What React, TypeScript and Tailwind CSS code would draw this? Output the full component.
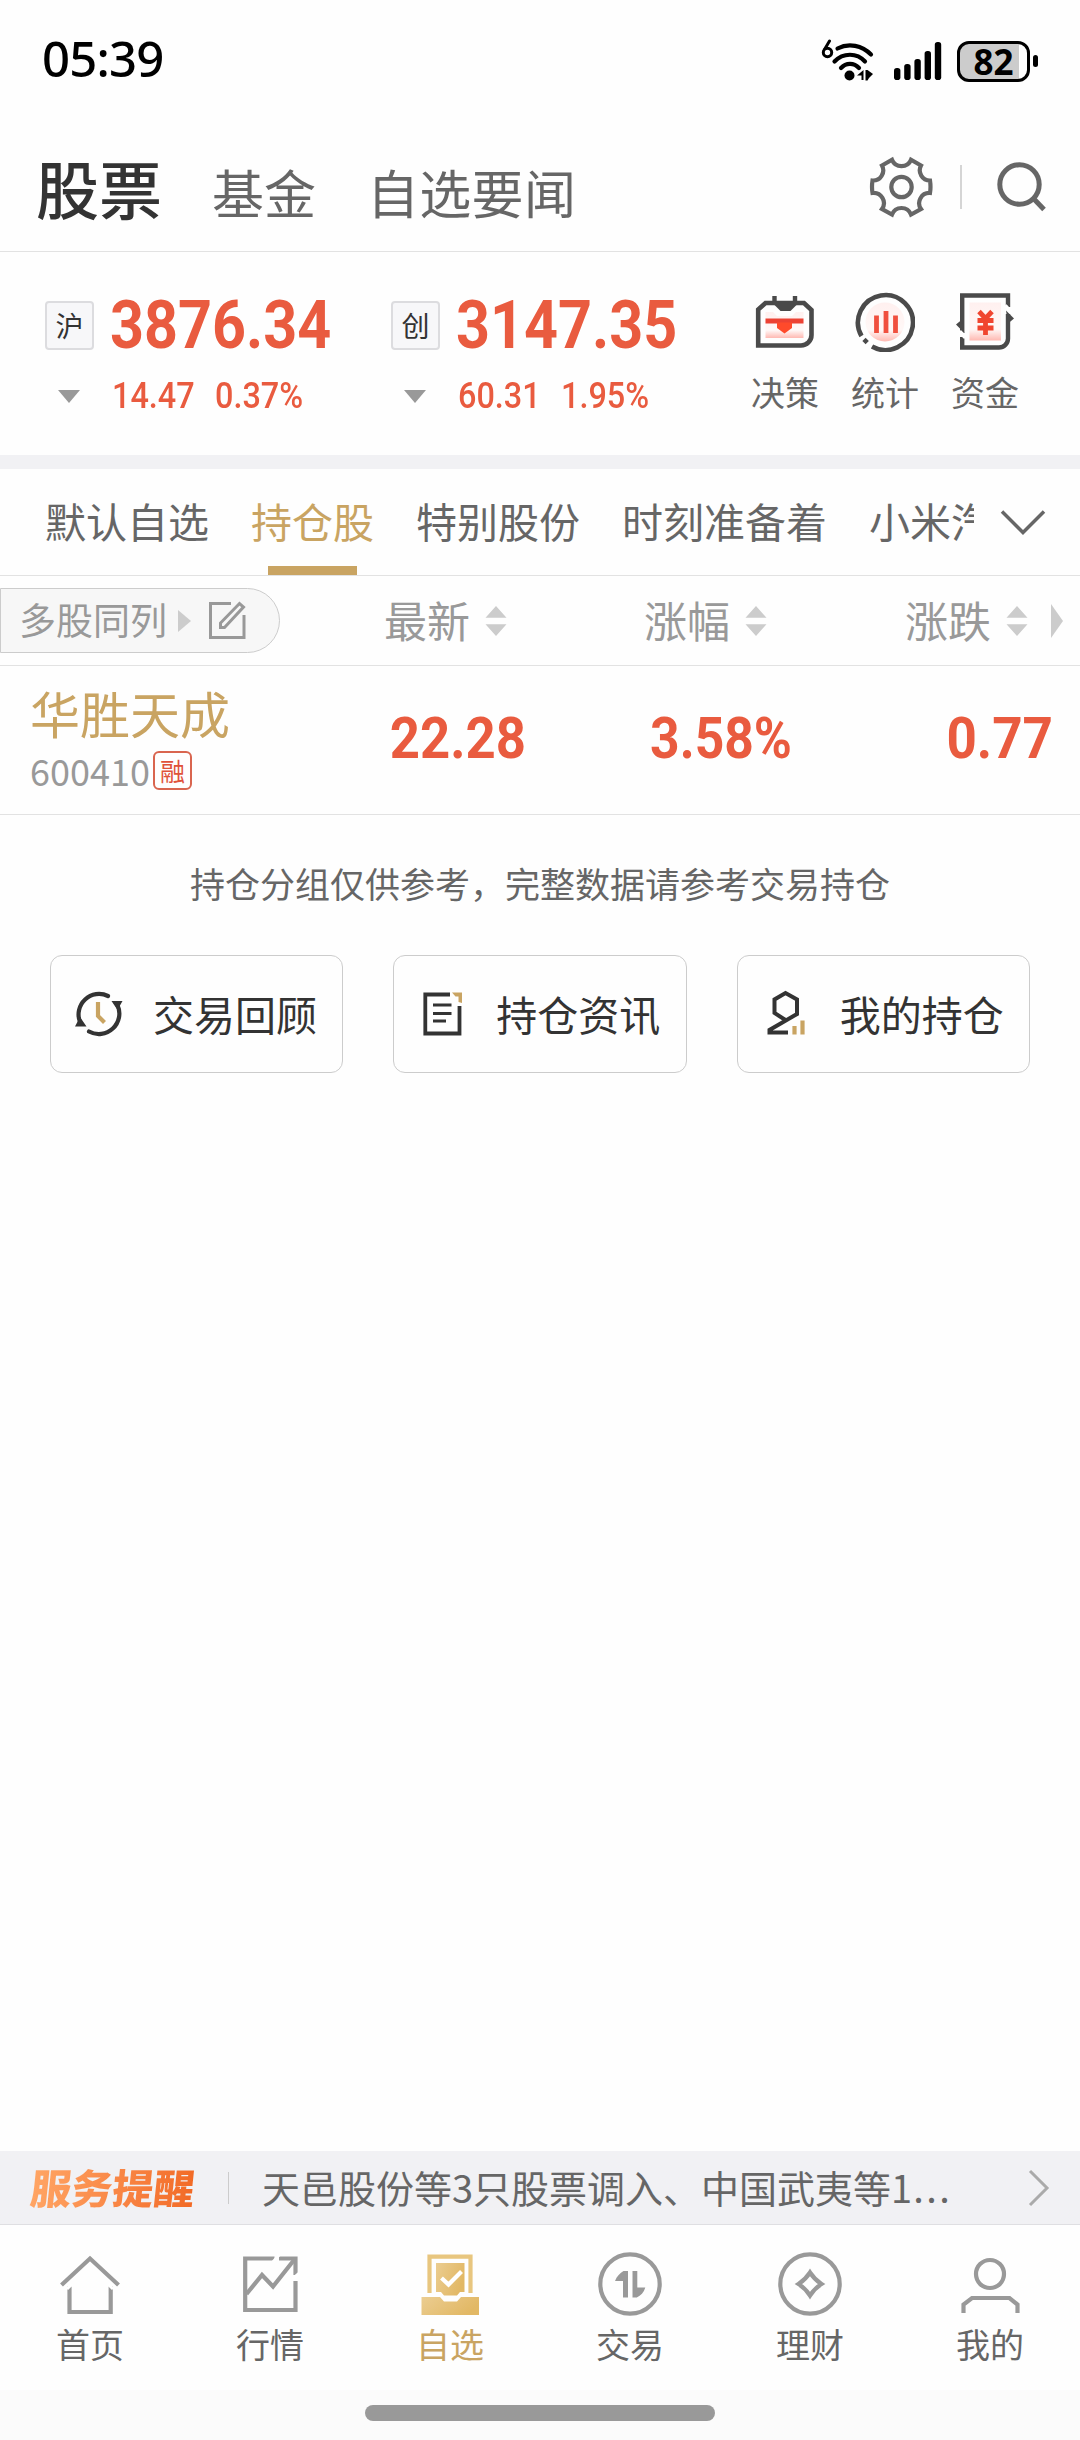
import { ReactNode } from 'react';
import clsx from 'clsx';

const GROUPS = ['默认自选', '持仓股', '特别股份', '时刻准备着', '小米汽车'];

const INDEXES = [
  { badge: '沪', value: '3876.34', change: '14.47', percent: '0.37%' },
  { badge: '创', value: '3147.35', change: '60.31', percent: '1.95%' },
];

function WifiIcon() {
  return (
    <svg width="54" height="44" viewBox="0 0 54 44" fill="none">
      <g stroke="#000" strokeWidth="4.200" strokeLinecap="round">
        <path d="M16.500 9.500C28 3.500 41 6.500 50 15.500" />
        <path d="M13.500 22.500C22 13.500 36 13.500 44 22.500" />
        <path d="M20 29C25 23.500 33 23.500 38 29" />
      </g>
      <circle cx="28.500" cy="36.500" r="5" fill="#000" />
      <path
        d="M36 36.500l6.500-5.500v10h-2v-4.500zM44.500 31h2l5.500 4-4 4-1.500 2.500h-2z"
        fill="#000"
      />
      <path
        d="M8.500 2L3.500 10.500"
        stroke="#000"
        strokeWidth="3"
        strokeLinecap="round"
      />
      <circle
        cx="6.500"
        cy="13.500"
        r="4.200"
        fill="#fefefe"
        stroke="#000"
        strokeWidth="3"
      />
    </svg>
  );
}

function SignalIcon() {
  const bars = [12, 16, 21, 29, 38];
  return (
    <svg width="48" height="38" viewBox="0 0 48 38">
      {bars.map((h, i) => (
        <rect
          key={h}
          x={i * 10.2}
          y={38 - h}
          width="6.400"
          height={h}
          rx="2.800"
        />
      ))}
    </svg>
  );
}

function GearIcon() {
  return (
    <svg width="64" height="62" viewBox="0 0 64 62" fill="none">
      <path
        d="M23 3.700A10.200 10.200 0 0 0 42 3.700L52 9.500A10.200 10.200 0 0 0 61 24.500Q62 31 61 37A10.200 10.200 0 0 0 52 53L42 58.500A10.200 10.200 0 0 0 23 58.500L13 53A10.200 10.200 0 0 0 3.500 37Q2.500 31 3.500 24.500A10.200 10.200 0 0 0 13 9.500Z"
        stroke="#666"
        strokeWidth="4.200"
      />
      <circle cx="32.500" cy="31" r="10.200" stroke="#666" strokeWidth="4.200" />
    </svg>
  );
}

function SearchIcon() {
  return (
    <svg width="50" height="50" viewBox="0 0 50 50" fill="none">
      <g stroke="#666" strokeWidth="5">
        <circle cx="22.500" cy="22.500" r="19.700" />
        <path d="M36.500 36.500L47 47.500" />
      </g>
    </svg>
  );
}

function DecisionIcon() {
  return (
    <svg width="60" height="60" viewBox="0 0 60 60" fill="none">
      <defs>
        <linearGradient id="panelFade" x1="0" y1="0" x2="0" y2="1">
          <stop offset="0" stopColor="#fff0ef" />
          <stop offset="0.7" stopColor="#fff8f7" />
          <stop offset="1" stopColor="#ffb9b2" />
        </linearGradient>
      </defs>
      <path
        d="M10.500 20H18l4 4h15l4-4h7.500v26h-38z"
        fill="url(#panelFade)"
      />
      <path
        d="M3.200 53.500V17.500L10.500 11H49L56.500 18V43A10.500 10.500 0 0 1 46 53.500Z"
        stroke="#4a4a4a"
        strokeWidth="4.600"
      />
      <path d="M19.500 4v8M40 4v8" stroke="#4a4a4a" strokeWidth="4.400" />
      <path d="M19.500 10h22v3l-6 6h-10l-6-6z" fill="#4a4a4a" />
      <path d="M10.500 26.500h38v5h-38z" fill="#ec4234" />
      <path d="M22 30.500h15V36l-7.500 5.500L22 36z" fill="#ff4a2b" />
    </svg>
  );
}

function StatsIcon() {
  return (
    <svg width="60" height="60" viewBox="0 0 60 60" fill="none">
      <circle cx="30" cy="30" r="19.500" fill="url(#panelFade)" />
      <path
        d="M6.500 44A27.500 27.500 0 1 1 17 54.500"
        stroke="#4a4a4a"
        strokeWidth="4.600"
      />
      <path d="M10.600 45.800l3.200 3.200-3.200 3.200-3.200-3.200z" fill="#4a4a4a" />
      <path
        d="M21.500 23.500V41M31 19V41M40.500 23.500V41"
        stroke="#f0503f"
        strokeWidth="4.800"
      />
    </svg>
  );
}

function FundsIcon() {
  return (
    <svg width="60" height="60" viewBox="0 0 60 60" fill="none">
      <path d="M14.500 10.500H46V48.500H14.500z" fill="url(#panelFade)" />
      <g stroke="#4a4a4a" strokeWidth="4.400">
        <path d="M53 15V3.500H7.200V41" />
        <path d="M7.200 45V55.500H44A9 9 0 0 0 53 46.500V22" />
      </g>
      <path d="M9.300 41L1 32.500l6-5zM51 18.500l8 8-6 5z" fill="#4a4a4a" />
      <path d="M4.500 39.500l6 6M50 13.500l6 6.500" stroke="#fff" strokeWidth="4" />
      <path
        d="M24 19.500l6.500 7 6.500-7M22.500 28.500h16M22.500 36h16M30.500 27v16"
        stroke="#f0452f"
        strokeWidth="4.800"
      />
    </svg>
  );
}

function ReviewIcon() {
  return (
    <svg width="50" height="48" viewBox="0 0 50 48" fill="none">
      <g stroke="#333" strokeWidth="4.200" strokeLinecap="round">
        <path d="M33 6A20.500 20.500 0 0 0 5 32" />
        <path d="M14 41.500A20.500 20.500 0 0 0 42.500 15" />
      </g>
      <path d="M0 36.500L5 27l6.500 9.500zM47.500 11h-11l6 9z" fill="#333" />
      <path d="M23 12V26l6.500 6.500" stroke="#c9a462" strokeWidth="4.200" />
    </svg>
  );
}

function NewsIcon() {
  return (
    <svg width="42" height="46" viewBox="0 0 42 46" fill="none">
      <path
        d="M28 3.500H3.300V42.500H37.500V15"
        stroke="#333"
        strokeWidth="3.800"
      />
      <path
        d="M11 14H29.500M11 22.500H29.500M11 30H24"
        stroke="#333"
        strokeWidth="3"
      />
      <path d="M30 1.500h10V12l-3.500-1V5.500h-3z" fill="#c9a462" />
    </svg>
  );
}

function PositionIcon() {
  return (
    <svg width="42" height="48" viewBox="0 0 42 48" fill="none">
      <path
        d="M22 42.500H3.500V40L31 24V9.500L19.500 3L8.500 9.500V23L19.500 30"
        stroke="#333"
        strokeWidth="4"
      />
      <path
        d="M28.500 36v8.500M36.500 30.500v14"
        stroke="#c9a462"
        strokeWidth="4.200"
      />
    </svg>
  );
}

function EditIcon() {
  return (
    <svg width="40" height="40" viewBox="0 0 40 40" fill="none">
      <g stroke="#999" strokeWidth="3">
        <path d="M23 3.500H2.500V37.500H36V15" />
        <path d="M12.500 27.500V23L31.500 3.500L35.500 7L16.500 27.500Z" />
      </g>
    </svg>
  );
}

function SortArrows() {
  return (
    <svg width="22" height="30" viewBox="0 0 22 30" fill="#ccc">
      <path d="M11 0l10.500 11.800H.5zM11 30L.5 18.200h21z" />
    </svg>
  );
}

function ChevronRight() {
  return (
    <svg width="22" height="38" viewBox="0 0 22 38" fill="none">
      <path d="M2 2l17 17L2 36" stroke="#aaa" strokeWidth="3" />
    </svg>
  );
}

function HomeIcon() {
  return (
    <svg width="64" height="64" viewBox="0 0 64 64" fill="none">
      <g stroke="#999" strokeWidth="4.200">
        <path d="M3.500 33L32 6.500L60.500 33" />
        <path d="M11.500 34.500V60H52.700V34.500" />
      </g>
      <path d="M9 37l5-5M55 37l-5-5" stroke="#fff" strokeWidth="3" />
    </svg>
  );
}

function MarketIcon() {
  return (
    <svg width="64" height="64" viewBox="0 0 64 64" fill="none">
      <g stroke="#999" strokeWidth="4.200">
        <path d="M36.500 6.500H7.200V58H57.500V29" />
        <path d="M41 6.500H57.500V23" />
        <path d="M8.500 42L24 23L35 34.500L56 8" />
      </g>
      <path d="M35 10l6-7M54.500 27l7-6" stroke="#fff" strokeWidth="3" />
    </svg>
  );
}

function WatchlistIcon() {
  return (
    <svg width="64" height="64" viewBox="0 0 64 64" fill="none">
      <defs>
        <linearGradient id="gold" x1="0" y1="0" x2="1" y2="0.4">
          <stop offset="0" stopColor="#ebcd91" />
          <stop offset="1" stopColor="#e2b865" />
        </linearGradient>
      </defs>
      <path d="M11.500 41V4.700H52.500V41" stroke="#e8c67f" strokeWidth="4.200" />
      <path d="M18 11H46.500V40H42l-3 3.500H26L23 40h-5z" fill="url(#gold)" />
      <path d="M3.500 45H22l4 4.500H39l4-4.500H61V63H3.500z" fill="url(#gold)" />
      <path
        d="M23.500 26L30.500 32.500L43.500 19.500"
        stroke="#fff"
        strokeWidth="4.200"
      />
    </svg>
  );
}

function TradeIcon() {
  return (
    <svg width="66" height="66" viewBox="0 0 66 66" fill="none">
      <circle cx="33" cy="33" r="29.700" stroke="#999" strokeWidth="4.200" />
      <path
        d="M31 20v26.500h-5V30h-8c2-5 5-8 8.500-10zM35.500 20h4.800v16.500h8c-1.500 5-4.500 8-8.500 10h-4.300z"
        fill="#999"
      />
    </svg>
  );
}

function WealthIcon() {
  return (
    <svg width="66" height="66" viewBox="0 0 66 66" fill="none">
      <g stroke="#999" strokeWidth="4.200">
        <circle cx="33" cy="33" r="29.700" />
        <path d="M33 21.500Q37.500 28.500 44.500 33Q37.500 37.500 33 44.500Q28.500 37.500 21.500 33Q28.500 28.500 33 21.500Z" />
      </g>
    </svg>
  );
}

function MineIcon() {
  return (
    <svg width="64" height="64" viewBox="0 0 64 64" fill="none">
      <g stroke="#999" strokeWidth="4.200">
        <circle cx="32" cy="22" r="14" />
        <path d="M5.500 61V52.500L14 46H51.500L59.500 52.500V61" />
      </g>
    </svg>
  );
}

const SHORTCUTS = [
  { label: '决策', icon: <DecisionIcon /> },
  { label: '统计', icon: <StatsIcon /> },
  { label: '资金', icon: <FundsIcon /> },
];

const ACTIONS = [
  { label: '交易回顾', icon: <ReviewIcon /> },
  { label: '持仓资讯', icon: <NewsIcon /> },
  { label: '我的持仓', icon: <PositionIcon /> },
];

const NAV = [
  { label: '首页', icon: <HomeIcon /> },
  { label: '行情', icon: <MarketIcon /> },
  { label: '自选', icon: <WatchlistIcon />, active: true },
  { label: '交易', icon: <TradeIcon /> },
  { label: '理财', icon: <WealthIcon /> },
  { label: '我的', icon: <MineIcon /> },
];

function StatusBar() {
  return (
    <div className="flex h-[122px] items-center pr-[42px] pl-[42px] text-black">
      <span className="mb-1.5 flex-1 font-['Noto_Sans'] text-[49px] leading-[60px] font-medium tracking-[-0.8px]">
        05:39
      </span>
      <div className="flex items-center">
        <WifiIcon />
        <div className="ml-[19px]">
          <SignalIcon />
        </div>
        <div className="ml-[15px] flex h-[41px] w-[73px] items-center justify-center rounded-xl border-[3px] border-black bg-[linear-gradient(to_right,#ccc_88%,#fff_88%)] font-['Noto_Sans'] text-[35px] leading-none font-bold">
          82
        </div>
        <div className="ml-[3px] h-3 w-[5px] rounded-sm bg-black" />
      </div>
    </div>
  );
}

function Header() {
  return (
    <div className="flex h-[130px] items-center border-b border-[#e2e2e2] pr-[33px] pl-9 text-[52px] text-[#666]">
      <span className="text-[63px] leading-[80px] font-medium text-[#333]">
        股票
      </span>
      <span className="mt-2.5 ml-[50px] leading-[80px]">基金</span>
      <span className="mt-2.5 ml-[51px] flex-1 leading-[80px] tracking-[0.3px]">
        自选要闻
      </span>
      <div className="flex items-center">
        <GearIcon />
        <div className="ml-[27px] h-11 w-0.5 bg-[#d5d5d5]" />
        <div className="ml-[35px]">
          <SearchIcon />
        </div>
      </div>
    </div>
  );
}

function IndexCard({ badge, value, change, percent }: (typeof INDEXES)[0]) {
  return (
    <div className="w-[346px] pt-[42px] font-[Roboto] text-[#e95b3f]">
      <div className="flex h-[62px] items-center">
        <span className="flex h-[49px] w-[49px] shrink-0 items-center justify-center rounded border-2 border-[#dcdcdf] bg-[#f7f7f9] font-['Noto_Sans_CJK_SC'] text-[28px] leading-none text-[#333]">
          {badge}
        </span>
        <span className="ml-4 origin-left scale-x-[0.885] text-[67px] leading-[62px] font-bold whitespace-nowrap">
          {value}
        </span>
      </div>
      <div className="mt-[15px] flex h-[50px] items-center text-[36px] font-medium">
        <svg className="ml-[13px]" width="22" height="13" viewBox="0 0 22 13">
          <path d="M0 0h22L11 13z" fill="#999" />
        </svg>
        <span className="ml-[32px] w-[103px] origin-left scale-x-[0.9] whitespace-nowrap">
          {change}
        </span>
        <span className="origin-left scale-x-[0.9] whitespace-nowrap">
          {percent}
        </span>
      </div>
    </div>
  );
}

function MarketSummary() {
  return (
    <div className="flex h-[217px] border-b-[14px] border-[#f1f1f4] pl-[45px]">
      {INDEXES.map((item) => (
        <IndexCard key={item.badge} {...item} />
      ))}
      <div className="-ml-0.5 flex pt-[40px]">
        {SHORTCUTS.map(({ label, icon }) => (
          <div key={label} className="flex w-[100px] flex-col items-center">
            {icon}
            <span className="mt-[15px] text-[34px] leading-[50px] text-[#666]">
              {label}
            </span>
          </div>
        ))}
      </div>
    </div>
  );
}

function GroupTabs() {
  return (
    <div className="flex h-[107px] border-b border-[#e2e2e2] text-[41px] text-[#666]">
      <div className="flex w-[974px] gap-[42px] overflow-hidden pl-[45px] whitespace-nowrap">
        {GROUPS.map((name) => {
          const active = name === '持仓股';
          return (
            <div
              key={name}
              className={clsx(
                'flex shrink-0 flex-col items-center',
                active && 'text-[#c9a462]',
              )}
            >
              <span className="mt-[21px] leading-[60px]">{name}</span>
              {active && (
                <div className="mt-auto h-[9px] w-[89px] bg-[#c9a462]" />
              )}
            </div>
          );
        })}
      </div>
      <svg
        className="mt-[40px] ml-[26px]"
        width="46"
        height="28"
        viewBox="0 0 46 28"
        fill="none"
      >
        <path d="M2 2.500L23 23.500L44 2.500" stroke="#666" strokeWidth="3.500" />
      </svg>
    </div>
  );
}

function SortHeader({ children }: { children: ReactNode }) {
  return (
    <div className="flex items-center gap-[15px]">
      <span className="mb-[3px] leading-[60px]">{children}</span>
      <SortArrows />
    </div>
  );
}

function TableHead() {
  return (
    <div className="flex h-[90px] items-center border-b border-[#e2e2e2] text-[43px] text-[#999]">
      <div className="flex h-[65px] w-[280px] items-center rounded-r-full border border-[#ccc] bg-[#f7f7f7] pl-[18px] text-[37px]">
        <span className="mb-[3px] leading-[56px]">多股同列</span>
        <svg className="ml-[11px]" width="13" height="22" viewBox="0 0 13 22">
          <path d="M0 0v22l13-11z" fill="#ccc" />
        </svg>
        <div className="mb-[2px] ml-[17px]">
          <EditIcon />
        </div>
      </div>
      <div className="ml-[104px] w-[260px]">
        <SortHeader>最新</SortHeader>
      </div>
      <div className="w-[261px]">
        <SortHeader>涨幅</SortHeader>
      </div>
      <SortHeader>涨跌</SortHeader>
      <svg className="ml-[23px]" width="12" height="34" viewBox="0 0 12 34">
        <path d="M0 0v34l12-17z" fill="#ccc" />
      </svg>
    </div>
  );
}

function StockRow() {
  return (
    <div className="flex h-[149px] border-b border-[#e2e2e2]">
      <div className="w-[330px] pt-[10px] pl-[30px]">
        <div className="text-[50px] leading-[72px] text-[#c9a462]">
          华胜天成
        </div>
        <div className="flex h-[44px] items-center">
          <span className="text-[36px] leading-[44px] text-[#999]">600410</span>
          <span className="ml-[3px] flex h-[39px] w-[39px] items-center justify-center rounded-md border-2 border-[#d9654f] text-[25px] leading-none text-[#e0523a]">
            融
          </span>
        </div>
      </div>
      <div className="flex flex-1 items-center pr-[27px] pb-[3px] font-[Roboto] text-[57px] font-bold text-[#e95b3f]">
        <span className="w-[196px] origin-right scale-x-[0.925] text-right">
          22.28
        </span>
        <span className="w-[266px] origin-right scale-x-[0.905] text-right">
          3.58%
        </span>
        <span className="flex-1 origin-right scale-x-[0.93] text-right">
          0.77
        </span>
      </div>
    </div>
  );
}

function ServiceReminder() {
  return (
    <div className="flex h-[74px] items-center border-b border-[#dfdfe2] bg-[#f1f1f4] pr-[30px] pl-[31px]">
      <span className="mb-[3px] -skew-x-6 bg-linear-to-r from-[#ffa564] to-[#f26a25] bg-clip-text text-[41px] leading-[60px] font-black text-transparent">
        服务提醒
      </span>
      <div className="ml-[33px] h-8 w-px bg-[#ccc]" />
      <span className="mb-[2px] ml-[33px] flex-1 text-[38px] leading-[60px] whitespace-nowrap text-[#666]">
        天邑股份等3只股票调入、中国武夷等1
        <span className="ml-px tracking-[2.5px]">...</span>
      </span>
      <ChevronRight />
    </div>
  );
}

function BottomNav() {
  return (
    <div className="flex h-[165px] bg-[#fefefe]">
      {NAV.map(({ label, icon, active }) => (
        <div key={label} className="flex flex-1 flex-col items-center pt-[26px]">
          <div className="flex h-[66px] items-center">{icon}</div>
          <span
            className={clsx(
              'mt-[2px] text-[34px] leading-[50px]',
              active ? 'text-[#c9a462]' : 'text-[#666]',
            )}
          >
            {label}
          </span>
        </div>
      ))}
    </div>
  );
}

export default function App() {
  return (
    <div className="flex h-[2440px] w-[1080px] flex-col overflow-hidden bg-[#fefefe] font-['Noto_Sans_CJK_SC',sans-serif]">
      <StatusBar />
      <Header />
      <MarketSummary />
      <GroupTabs />
      <TableHead />
      <StockRow />
      <p className="mt-[42px] text-center text-[35px] leading-[52px] text-[#666]">
        持仓分组仅供参考，完整数据请参考交易持仓
      </p>
      <div className="mt-[46px] flex gap-[50px] px-[50px]">
        {ACTIONS.map(({ label, icon }) => (
          <div
            key={label}
            className="flex h-[118px] flex-1 items-center rounded-xl border border-[#ccc] text-[41px] text-[#333]"
          >
            <div className="ml-[22px] flex w-[54px] justify-center">{icon}</div>
            <span className="mb-[3px] ml-[26px] leading-[60px] whitespace-nowrap">
              {label}
            </span>
          </div>
        ))}
      </div>
      <div className="flex-1" />
      <ServiceReminder />
      <BottomNav />
      <div className="flex h-[50px] justify-center bg-[#fbfbfb] pt-[15px]">
        <div className="h-4 w-[350px] rounded-full bg-[#999]" />
      </div>
    </div>
  );
}
